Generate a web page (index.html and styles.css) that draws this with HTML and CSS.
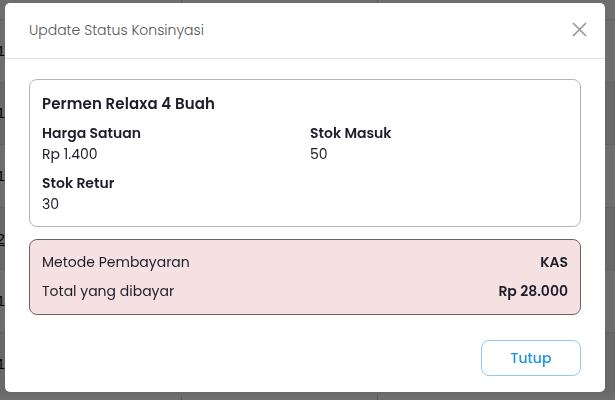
FILE: index.html
```html
<!DOCTYPE html>
<html lang="id">
<head>
<meta charset="utf-8">
<title>Update Status Konsinyasi</title>
<link rel="stylesheet" href="styles.css">
</head>
<body>
<div class="page">
  <div class="thead"><span></span><span class="col-b"></span><span class="col-c"></span></div>
  <div class="trow odd"><span>1</span></div>
  <div class="trow"><span>1</span></div>
  <div class="trow odd"><span>1</span></div>
  <div class="trow"><span class="u">2</span></div>
  <div class="trow odd"><span>1</span></div>
  <div class="trow"><span>1</span></div>
  <div class="tfoot"><span></span><span class="col-b"></span><span class="col-c"></span></div>
</div>
<div class="backdrop"></div>
<div class="modal">
  <div class="modal-header">
    <h5 class="modal-title">Update Status Konsinyasi</h5>
    <button class="close" aria-label="Close">
      <svg width="15" height="15" viewBox="0 0 15 15"><path d="M1 1 L14 14 M14 1 L1 14" stroke="#9a9a9a" stroke-width="1.7" fill="none"/></svg>
    </button>
  </div>
  <div class="modal-body">
    <div class="card">
      <div class="item-name">Permen Relaxa 4 Buah</div>
      <div class="grid">
        <div class="field">
          <div class="label">Harga Satuan</div>
          <div class="value">Rp 1.400</div>
        </div>
        <div class="field">
          <div class="label">Stok Masuk</div>
          <div class="value">50</div>
        </div>
        <div class="field">
          <div class="label">Stok Retur</div>
          <div class="value">30</div>
        </div>
      </div>
    </div>
    <div class="summary">
      <div class="srow"><span>Metode Pembayaran</span><strong>KAS</strong></div>
      <div class="srow"><span>Total yang dibayar</span><strong>Rp 28.000</strong></div>
    </div>
  </div>
  <div class="modal-footer">
    <button class="btn-close">Tutup</button>
  </div>
</div>
</body>
</html>
```
FILE: styles.css
```css
* { box-sizing: border-box; }
html, body { margin: 0; padding: 0; }
body {
  width: 615px;
  height: 400px;
  overflow: hidden;
  font-family: "Poppins", "Open Sans", "DejaVu Sans", sans-serif;
  color: #1d1d2b;
  background: #f4f4f4;
}
.page { display: flex; flex-direction: column; }
.thead, .tfoot {
  height: 19px;
  display: flex;
  background: #fafafa;
}
.thead span, .tfoot span { height: 100%; }
.thead span:first-child, .tfoot span:first-child { width: 182px; border-right: 1px solid #d0d0d0; }
.thead .col-b, .tfoot .col-b { width: 196px; border-right: 1px solid #d0d0d0; }
.trow {
  height: 62.6px;
  display: flex;
  align-items: center;
  background: #ededed;
  border-top: 1px solid #dcdcdc;
  font-family: "Liberation Sans", sans-serif;
  font-size: 14px;
  color: #000;
}
.trow.odd { background: #f7f7f7; }
.trow span { margin-left: -3px; }
.trow .u { text-decoration: underline; }
.backdrop {
  position: fixed;
  inset: 0;
  background: rgba(0, 0, 0, 0.56);
}
.modal {
  position: fixed;
  left: 5px;
  top: 3px;
  width: 600px;
  height: 389px;
  background: #fff;
  border-radius: 5px;
  display: flex;
  flex-direction: column;
}
.modal-header {
  height: 56px;
  padding: 0 18px 0 24px;
  display: flex;
  align-items: center;
  justify-content: space-between;
  border-bottom: 1px solid #e2e2e2;
}
.modal-title {
  margin: 0;
  font-size: 14px;
  font-weight: 300;
  color: #555;
}
.close {
  border: 0;
  background: none;
  padding: 0;
  width: 15px;
  height: 15px;
  display: flex;
  margin-top: -2px;
}
.modal-body {
  padding: 20px 24px 0 24px;
  display: flex;
  flex-direction: column;
  gap: 12px;
}
.card {
  border: 1px solid #b4b4b4;
  border-radius: 8px;
  padding: 13px 12px 12px 12px;
  height: 148px;
}
.item-name {
  font-size: 15px;
  font-weight: 600;
  line-height: 21px;
  letter-spacing: 0.1px;
}
.grid {
  display: grid;
  grid-template-columns: 1fr 1fr;
  column-gap: 10px;
  row-gap: 8px;
  margin-top: 9px;
}
.label {
  font-size: 14px;
  font-weight: 600;
  line-height: 21px;
}
.value {
  font-size: 14px;
  font-weight: 400;
  line-height: 21px;
}
.summary {
  background: #f5e1e1;
  border: 1px solid #6d6262;
  border-radius: 8px;
  padding: 12px 12px;
  display: flex;
  flex-direction: column;
  gap: 8px;
}
.srow {
  display: flex;
  justify-content: space-between;
  font-size: 14px;
  line-height: 21px;
}
.srow strong { font-weight: 600; }
.modal-footer {
  display: flex;
  justify-content: flex-end;
  padding: 25px 24px 0 24px;
}
.btn-close {
  width: 100px;
  height: 36px;
  border: 1px solid #8fcdf2;
  border-radius: 8px;
  background: #fff;
  color: #1a94e2;
  font-family: inherit;
  font-size: 14px;
  font-weight: 500;
  padding: 0;
}
```
